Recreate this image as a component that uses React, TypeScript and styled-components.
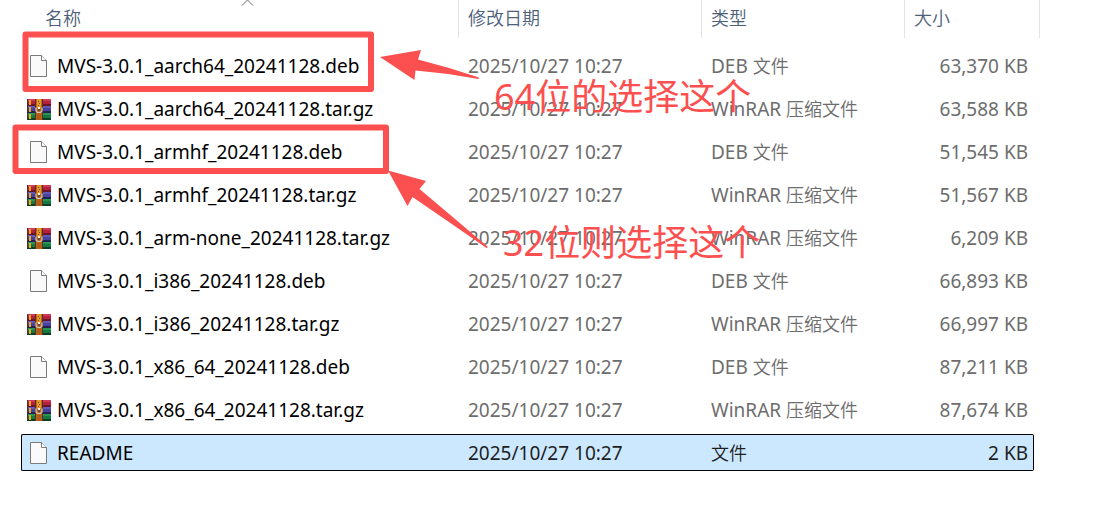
import React from "react";
import styled, { createGlobalStyle } from "styled-components";

const GlobalStyle = createGlobalStyle`
  body {
    margin: 0;
    background: #fff;
    font-family: "Noto Sans", "Noto Sans CJK SC", sans-serif;
    font-size: 19px;
    color: #6d6d6d;
  }
`;

const Page = styled.main`
  position: relative;
  padding: 0 61px 36px 21px;
`;

const FileTable = styled.table`
  width: 100%;
  table-layout: fixed;
  border-collapse: collapse;
`;

const Column = styled.col<{ $width?: number }>`
  width: ${({ $width }) => ($width ? `${$width}px` : "auto")};
`;

const HeaderCell = styled.th`
  padding: 0 0 6px;
  font-weight: 400;
`;

const HeaderButton = styled.button<{ $first?: boolean; $last?: boolean }>`
  position: relative;
  display: flex;
  align-items: center;
  width: 100%;
  height: 38px;
  padding: 0 0 4px ${({ $first }) => ($first ? 24 : 9)}px;
  border: 0 solid #e2e2e2;
  border-left-width: ${({ $first }) => ($first ? 0 : 1)}px;
  border-right-width: ${({ $last }) => ($last ? 1 : 0)}px;
  background: none;
  color: #4c607a;
  font-family: "Noto Sans CJK SC", sans-serif;
  font-size: 18px;
  font-weight: 350;
`;

const SortMark = styled.svg`
  position: absolute;
  top: 0;
  left: 50%;
  width: 14px;
  height: 6px;
`;

const Cell = styled.td<{ $last?: boolean }>`
  padding: 3px ${({ $last }) => ($last ? 6 : 0)}px 3px 0;
`;

const CellBody = styled.div<{
  $selected?: boolean;
  $edge?: "start" | "end";
  $dark?: boolean;
}>`
  display: flex;
  align-items: center;
  justify-content: ${({ $edge }) => ($edge === "end" ? "flex-end" : "flex-start")};
  box-sizing: border-box;
  height: 37px;
  padding: 0 ${({ $edge }) => ($edge === "end" ? 5 : 0)}px 0
    ${({ $edge }) => ($edge === "start" ? 5 : 10)}px;
  border: 0 solid ${({ $selected }) => ($selected ? "#000" : "transparent")};
  border-top-width: 1px;
  border-bottom-width: 1px;
  border-left-width: ${({ $edge }) => ($edge === "start" ? 1 : 0)}px;
  border-right-width: ${({ $edge }) => ($edge === "end" ? 1 : 0)}px;
  border-radius: ${({ $edge }) =>
    $edge === "start" ? "2px 0 0 2px" : $edge === "end" ? "0 2px 2px 0" : "0"};
  background: ${({ $selected }) => ($selected ? "#cce8ff" : "transparent")};
  color: ${({ $dark, $selected }) => ($dark ? "#000" : $selected ? "#1e1e1e" : "inherit")};
  line-height: 26px;
  white-space: pre;
`;

const IconSlot = styled.span`
  display: flex;
  justify-content: center;
  width: 24px;
  margin-right: 6px;
`;

const Han = styled.span`
  padding-bottom: 2px;
  font-family: "Noto Sans CJK SC", sans-serif;
  font-size: 18px;
  font-weight: 350;
  line-height: 24px;
`;

const Markup = styled.svg`
  position: absolute;
  top: 0;
  left: 0;
  width: 500px;
  height: 260px;
  pointer-events: none;
`;

const Note = styled.p<{ $x: number; $y: number }>`
  position: absolute;
  left: ${({ $x }) => $x}px;
  top: ${({ $y }) => $y}px;
  margin: 0;
  color: #fc5050;
  font-size: 36px;
  line-height: 48px;
  white-space: nowrap;
`;

const DocumentIcon = () => (
  <svg width="18" height="22" viewBox="0 0 18 22" aria-hidden="true">
    <path d="M.5.5h11l5 5v16H.5z" fill="#fafafa" stroke="#7a7a7a" />
    <path d="M11.5.5v5h5" fill="#fff" stroke="#7a7a7a" />
  </svg>
);

const ArchiveIcon = () => (
  <svg width="24" height="22" viewBox="0 0 24 22" aria-hidden="true">
    <path d="M0 1h24v6H0z" fill="#b51f40" />
    <path d="M0 1h24v2H0z" fill="#d03a58" />
    <path d="M0 6h24v2H0z" fill="#6b1428" />
    <path d="M1 8h23v6H1z" fill="#4742a0" />
    <path d="M1 8h23v2H1z" fill="#5f5ab8" />
    <path d="M0 13h24v2H0z" fill="#232052" />
    <path d="M0 15h24v6H0z" fill="#147a40" />
    <path d="M0 15h24v2H0z" fill="#259653" />
    <path d="M0 20h24v2H0z" fill="#0b4024" />
    <path d="M0 1h1v6H0zM0 8h1v6H0zM0 15h1v6H0z" fill="#47303c" />
    <path d="M2 2h2v5H2zM2 9h2v5H2zM2 16h2v5H2z" fill="#f0a61c" />
    <path d="M8 1h1v21H8zM15 1h1v21h-1z" fill="#5a2e20" />
    <path d="M9 1h6v21H9z" fill="#b9651c" />
    <path d="M10 1h4v9h-4z" fill="#e39a28" />
    <path d="M11 3h1v1h-1zM12 5h1v1h-1zM11 7h1v1h-1z" fill="#7a4a18" />
    <path d="M9 9.500v3.500l1.500 1.500h3L15 13V9.500" fill="none" stroke="#cfc9c0" strokeWidth="1.200" />
    <path d="M11 9h2v4h-2z" fill="#f3efe6" />
    <path d="M11 11h2v2h-2z" fill="#6b4a30" />
    <path d="M10 16h4v6h-4z" fill="#b05a1c" />
  </svg>
);

type Kind = "deb" | "archive" | "plain";

const files: { name: string; kind: Kind; size: string; selected?: boolean }[] = [
  { name: "MVS-3.0.1_aarch64_20241128.deb", kind: "deb", size: "63,370 KB" },
  { name: "MVS-3.0.1_aarch64_20241128.tar.gz", kind: "archive", size: "63,588 KB" },
  { name: "MVS-3.0.1_armhf_20241128.deb", kind: "deb", size: "51,545 KB" },
  { name: "MVS-3.0.1_armhf_20241128.tar.gz", kind: "archive", size: "51,567 KB" },
  { name: "MVS-3.0.1_arm-none_20241128.tar.gz", kind: "archive", size: "6,209 KB" },
  { name: "MVS-3.0.1_i386_20241128.deb", kind: "deb", size: "66,893 KB" },
  { name: "MVS-3.0.1_i386_20241128.tar.gz", kind: "archive", size: "66,997 KB" },
  { name: "MVS-3.0.1_x86_64_20241128.deb", kind: "deb", size: "87,211 KB" },
  { name: "MVS-3.0.1_x86_64_20241128.tar.gz", kind: "archive", size: "87,674 KB" },
  { name: "README", kind: "plain", size: "2 KB", selected: true },
];

const kindLabel: Record<Kind, [string, string]> = {
  deb: ["DEB ", "文件"],
  archive: ["WinRAR ", "压缩文件"],
  plain: ["", "文件"],
};

export default function App() {
  return (
    <Page lang="zh-CN">
      <GlobalStyle />
      <FileTable>
        <colgroup>
          <Column />
          <Column $width={243} />
          <Column $width={203} />
          <Column $width={136} />
        </colgroup>
        <thead>
          <tr>
            <HeaderCell scope="col" aria-sort="ascending">
              <HeaderButton type="button" $first>
                名称
                <SortMark viewBox="0 0 14 6" aria-hidden="true">
                  <path d="M2 5.500 7.500 0 13 5.500" fill="none" stroke="#6b6b6b" />
                </SortMark>
              </HeaderButton>
            </HeaderCell>
            <HeaderCell scope="col">
              <HeaderButton type="button">修改日期</HeaderButton>
            </HeaderCell>
            <HeaderCell scope="col">
              <HeaderButton type="button">类型</HeaderButton>
            </HeaderCell>
            <HeaderCell scope="col">
              <HeaderButton type="button" $last>大小</HeaderButton>
            </HeaderCell>
          </tr>
        </thead>
        <tbody>
          {files.map((file) => {
            const [latin, han] = kindLabel[file.kind];
            return (
              <tr key={file.name} aria-selected={!!file.selected}>
                <Cell>
                  <CellBody $edge="start" $selected={file.selected} $dark>
                    <IconSlot>
                      {file.kind === "archive" ? <ArchiveIcon /> : <DocumentIcon />}
                    </IconSlot>
                    {file.name}
                  </CellBody>
                </Cell>
                <Cell>
                  <CellBody $selected={file.selected}>2025/10/27 10:27</CellBody>
                </Cell>
                <Cell>
                  <CellBody $selected={file.selected}>
                    {latin}
                    <Han>{han}</Han>
                  </CellBody>
                </Cell>
                <Cell $last>
                  <CellBody $edge="end" $selected={file.selected}>
                    {file.size}
                  </CellBody>
                </Cell>
              </tr>
            );
          })}
        </tbody>
      </FileTable>
      <Markup viewBox="0 0 500 260" aria-hidden="true">
        <g fill="none" stroke="#fc5050" strokeWidth="6" strokeLinejoin="round">
          <rect x="25.500" y="34.500" width="345.500" height="54.500" />
          <rect x="15.500" y="127.500" width="370.500" height="43.500" />
        </g>
        <g fill="#fc5050">
          <path d="M380 57 421 50 418 59.500Q448 67 479 77.500L478.500 79Q447 73 415.500 70.500L414.500 80Z" />
          <path d="M388 170.500 426 181 419.500 189Q454 218 488 247L486.500 248Q449 222 412.500 197L407.500 206Z" />
        </g>
      </Markup>
      <Note $x={494} $y={73}>64位的选择这个</Note>
      <Note $x={503} $y={219}>32位则选择这个</Note>
    </Page>
  );
}
